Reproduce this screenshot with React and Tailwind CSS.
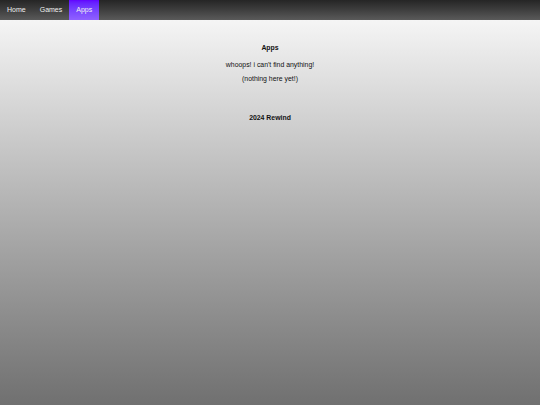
export default function App() {
  return (
    <div className="w-[540px] h-[405px] flex flex-col font-['Liberation_Sans',Arial,sans-serif] overflow-hidden">
      <nav className="h-[20px] flex bg-gradient-to-b from-[#252525] to-[#5a5a5a] text-[7px] text-[#f0f0f0]">
        <div className="pl-[7px] pr-[7px] flex items-center">Home</div>
        <div className="pl-[7px] pr-[7px] flex items-center">Games</div>
        <div className="pl-[7px] pr-[7px] flex items-center bg-gradient-to-b from-[#6200ff] to-[#9060ff]">Apps</div>
      </nav>
      <main className="flex-1 bg-gradient-to-b from-[#f5f5f5] to-[#707070] flex flex-col items-center pt-[24px] text-[6.9px] leading-[8px] text-[#111]">
        <div className="font-bold">Apps</div>
        <div className="mt-[9px]">whoops! i can't find anything!</div>
        <div className="mt-[6px]">(nothing here yet!)</div>
        <div className="mt-[31px] font-bold">2024 Rewind</div>
      </main>
    </div>
  );
}
